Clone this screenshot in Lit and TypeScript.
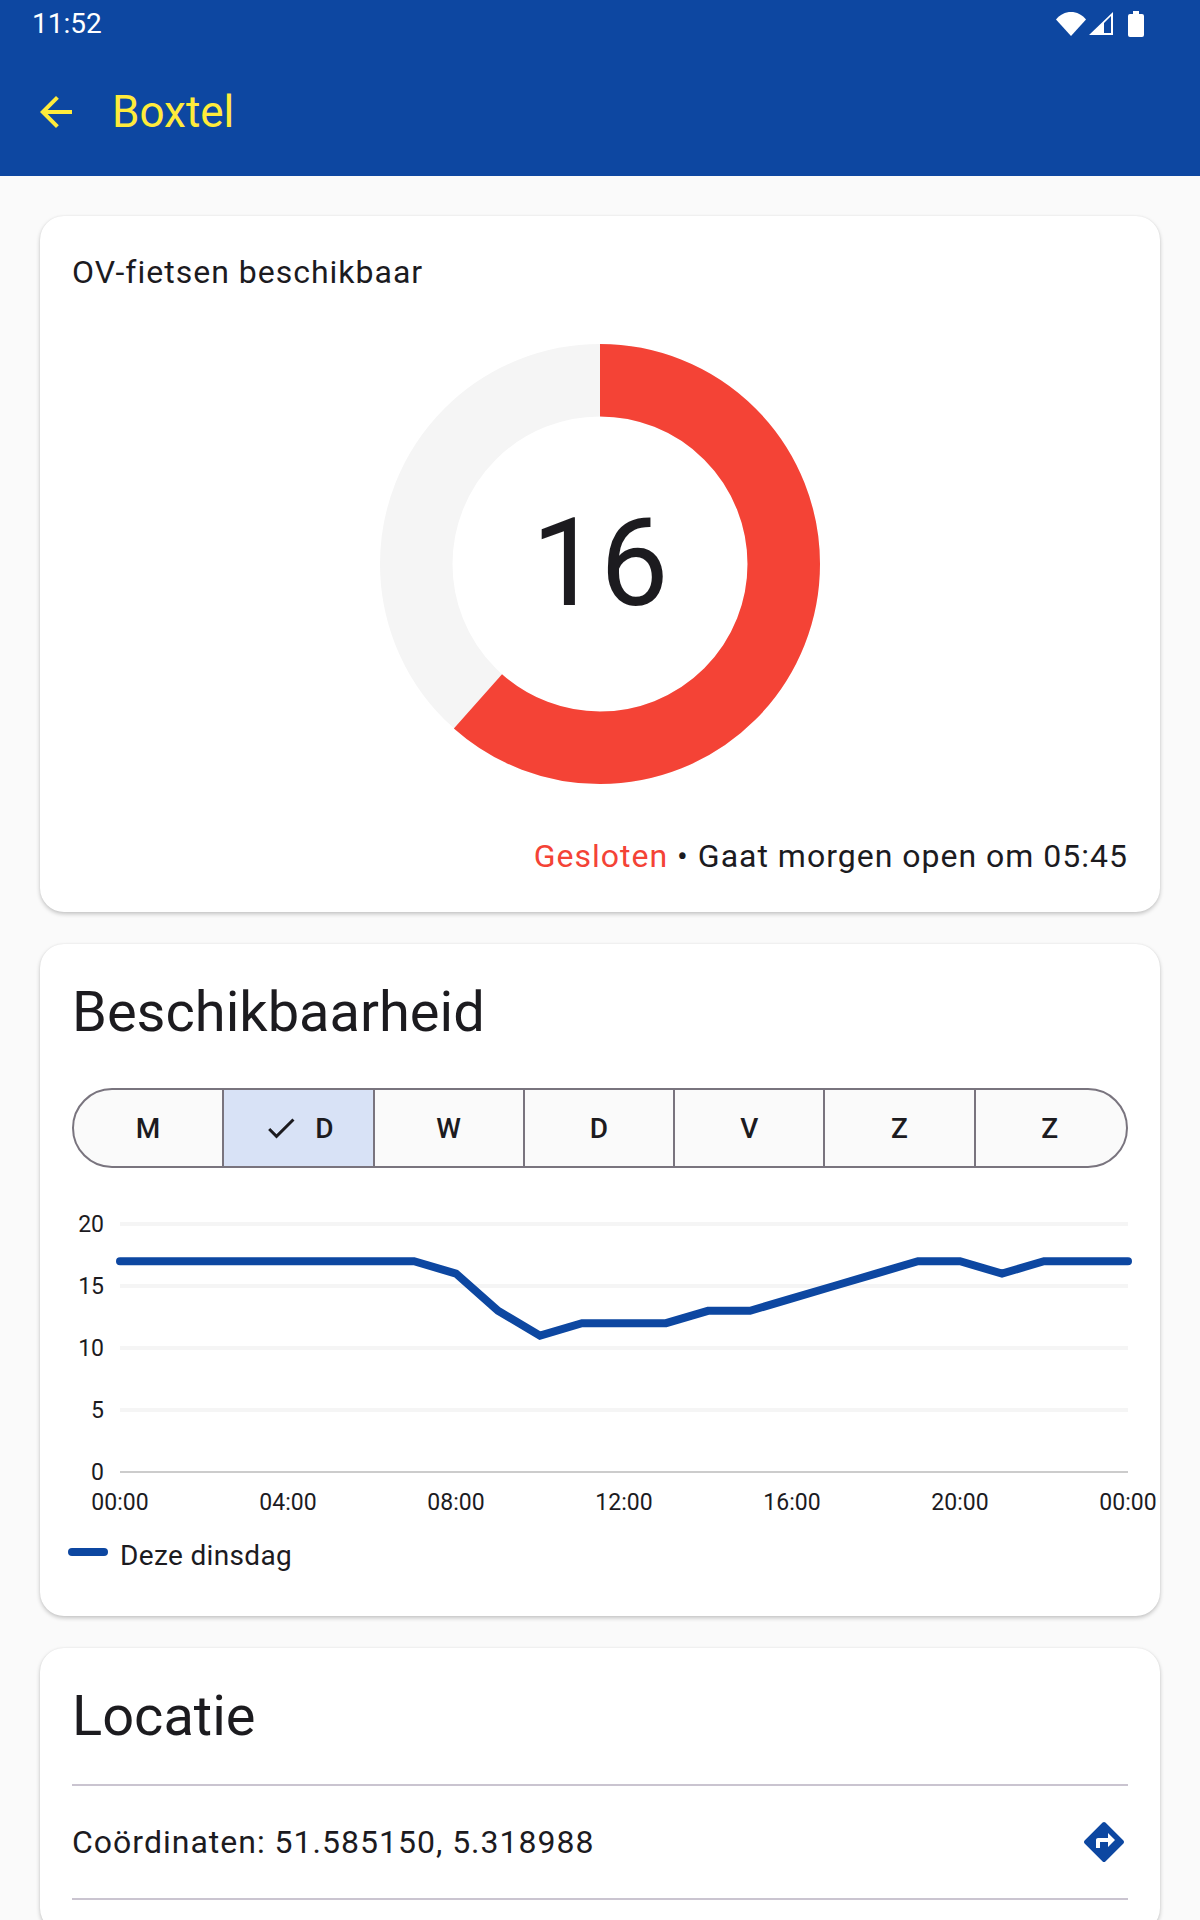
import { html, css, svg, LitElement } from 'lit';
import { customElement } from 'lit/decorators.js';

const DAYS = ['M', 'D', 'W', 'D', 'V', 'Z', 'Z'];
const HOURLY = [17, 17, 17, 17, 17, 17, 17, 17, 16, 13, 11, 12, 12, 12, 13, 13, 14, 15, 16, 17, 17, 16, 17, 17, 17];
const TICKS = ['00:00', '04:00', '08:00', '12:00', '16:00', '20:00', '00:00'];

const X0 = 80;
const XSTEP = 42;
const Y0 = 304;
const YUNIT = 12.4;

const RADIUS = 183.75;
const CIRCUMFERENCE = 2 * Math.PI * RADIUS;
const RATIO = 16 / 26;

@customElement('app-root')
export class AppRoot extends LitElement {
  static styles = css`
    :host {
      display: block;
      width: 1200px;
      height: 1920px;
      overflow: hidden;
      background: #fafafa;
      color: #1c1b1f;
      font-family: Roboto, sans-serif;
    }

    .appbar {
      background: #0d47a1;
    }

    .status {
      display: flex;
      align-items: center;
      justify-content: space-between;
      height: 48px;
      padding: 0 56px 0 32px;
      color: #fff;
      font-size: 28px;
    }

    .status span {
      margin-top: -2px;
    }

    .status svg {
      display: block;
      fill: #fff;
    }

    .toolbar {
      display: flex;
      align-items: center;
      gap: 32px;
      height: 128px;
      padding: 0 32px;
      color: #ffeb3b;
      font-size: 44px;
    }

    .toolbar svg {
      display: block;
      fill: currentColor;
    }

    main {
      display: flex;
      flex-direction: column;
      gap: 32px;
      padding: 40px 40px 0;
    }

    .card {
      background: #fff;
      border-radius: 24px;
      padding: 32px;
      box-shadow: 0 2px 4px rgba(0, 0, 0, 0.22), 0 0 2px rgba(0, 0, 0, 0.06);
    }

    .body {
      font-size: 32px;
      line-height: 48px;
      letter-spacing: 1px;
    }

    .donut {
      display: grid;
      place-items: center;
      width: 440px;
      height: 440px;
      margin: 48px auto;
    }

    .donut > * {
      grid-area: 1 / 1;
    }

    .donut span {
      font-size: 122px;
      line-height: 1;
    }

    .opening {
      text-align: right;
    }

    .closed {
      color: #f44336;
    }

    h2 {
      margin: 0;
      font-size: 56px;
      font-weight: 400;
      line-height: 72px;
    }

    .segments {
      display: grid;
      grid-template-columns: repeat(7, 1fr);
      height: 80px;
      margin-top: 40px;
      border: 2px solid #79747e;
      border-radius: 40px;
      box-sizing: border-box;
      overflow: hidden;
      background: #fafafa;
    }

    .segment {
      display: flex;
      align-items: center;
      justify-content: center;
      gap: 16px;
      padding-right: 2px;
      font-size: 28px;
      font-weight: 500;
      letter-spacing: 0.2px;
    }

    .segment + .segment {
      margin-left: -2px;
      border-left: 2px solid #79747e;
    }

    .segment.selected {
      background: #d8e2f6;
    }

    .segment svg {
      display: block;
      fill: currentColor;
    }

    .chart {
      display: block;
      margin: 0 -32px;
    }

    .chart text {
      font-size: 23px;
      fill: #1c1b1f;
    }

    .legend {
      display: flex;
      align-items: center;
      gap: 12px;
      height: 59px;
      margin-left: -4px;
      font-size: 28px;
      letter-spacing: 0.35px;
    }

    .legend span {
      margin-top: 2px;
    }

    .legend i {
      width: 40px;
      height: 8px;
      margin-top: -6px;
      border-radius: 4px;
      background: #0d47a1;
    }

    .card hr {
      margin: 32px 0 0;
      border: 0;
      border-top: 2px solid #cac4d0;
    }

    .row {
      display: flex;
      align-items: center;
      justify-content: space-between;
      height: 112px;
    }

    .row + hr {
      margin: 0;
    }

    .row svg {
      display: block;
      fill: #0d47a1;
    }
  `;

  private renderChart() {
    const points = HOURLY.map((v, i) => `${X0 + XSTEP * i},${Y0 - v * YUNIT}`).join(' ');
    return html`
      <svg class="chart" width="1120" height="357" viewBox="0 0 1120 357">
        ${[20, 15, 10, 5].map((v) => {
          const y = Y0 - v * YUNIT;
          return svg`
            <line x1="80" x2="1088" y1=${y} y2=${y} stroke="#f5f5f5" stroke-width="4"></line>
            <text x="64" y=${y + 7.5} text-anchor="end">${v}</text>
          `;
        })}
        <line x1="80" x2="1088" y1=${Y0} y2=${Y0} stroke="#cccccc" stroke-width="2"></line>
        <text x="64" y=${Y0 + 7.5} text-anchor="end">0</text>
        ${TICKS.map(
          (t, i) => svg`<text x=${X0 + 168 * i} y="342" text-anchor="middle">${t}</text>`,
        )}
        <polyline
          points=${points}
          fill="none"
          stroke="#0d47a1"
          stroke-width="8"
          stroke-linecap="round"
          stroke-linejoin="miter"
        ></polyline>
      </svg>
    `;
  }

  protected render() {
    return html`
      <header class="appbar">
        <div class="status">
          <span>11:52</span>
          <svg width="88" height="48" viewBox="0 0 88 48">
            <path d="M0 19.500C4 14.600 9.200 12 15 12s11 2.600 15 7.500L15 36z"></path>
            <path d="M33 35 57 12V35zM48 33V23L55 16V33z" fill-rule="evenodd"></path>
            <path
              d="M72 16a2 2 0 0 1 2-2h3v-3h6v3h3a2 2 0 0 1 2 2v19a2 2 0 0 1-2 2H74a2 2 0 0 1-2-2z"
            ></path>
          </svg>
        </div>
        <div class="toolbar">
          <svg width="48" height="48" viewBox="0 0 24 24">
            <path d="M20 11H7.830l5.590-5.590L12 4l-8 8 8 8 1.410-1.410L7.830 13H20v-2z"></path>
          </svg>
          <span>Boxtel</span>
        </div>
      </header>

      <main>
        <section class="card">
          <div class="body">OV-fietsen beschikbaar</div>
          <div class="donut">
            <svg width="440" height="440" viewBox="0 0 440 440">
              <circle cx="220" cy="220" r=${RADIUS} fill="none" stroke="#f5f5f5" stroke-width="72.5"></circle>
              <circle
                cx="220"
                cy="220"
                r=${RADIUS}
                fill="none"
                stroke="#f44336"
                stroke-width="72.5"
                stroke-dasharray="${CIRCUMFERENCE * RATIO} ${CIRCUMFERENCE}"
                transform="rotate(-90 220 220)"
              ></circle>
            </svg>
            <span>16</span>
          </div>
          <div class="body opening"><span class="closed">Gesloten</span> • Gaat morgen open om 05:45</div>
        </section>

        <section class="card">
          <h2>Beschikbaarheid</h2>
          <div class="segments">
            ${DAYS.map(
              (d, i) => html`
                <div class="segment ${i === 1 ? 'selected' : ''}">
                  ${i === 1
                    ? html`<svg width="36" height="36" viewBox="0 0 24 24">
                        <path d="M9 16.170L4.830 12l-1.420 1.410L9 19 21 7l-1.410-1.410z"></path>
                      </svg>`
                    : ''}
                  <span>${d}</span>
                </div>
              `,
            )}
          </div>
          ${this.renderChart()}
          <div class="legend"><i></i><span>Deze dinsdag</span></div>
        </section>

        <section class="card">
          <h2>Locatie</h2>
          <hr />
          <div class="row body">
            <span>Coördinaten: 51.585150, 5.318988</span>
            <svg width="48" height="48" viewBox="0 0 24 24">
              <path
                d="M21.710 11.290l-9-9c-.39-.39-1.020-.39-1.410 0l-9 9c-.39.39-.39 1.020 0 1.410l9 9c.39.39 1.020.39 1.410 0l9-9c.39-.38.39-1.010 0-1.410zM14 14.500V12h-4v3H8v-4c0-.55.45-1 1-1h5V7.500l3.500 3.500-3.500 3.500z"
              ></path>
            </svg>
          </div>
          <hr />
        </section>
      </main>
    `;
  }
}
